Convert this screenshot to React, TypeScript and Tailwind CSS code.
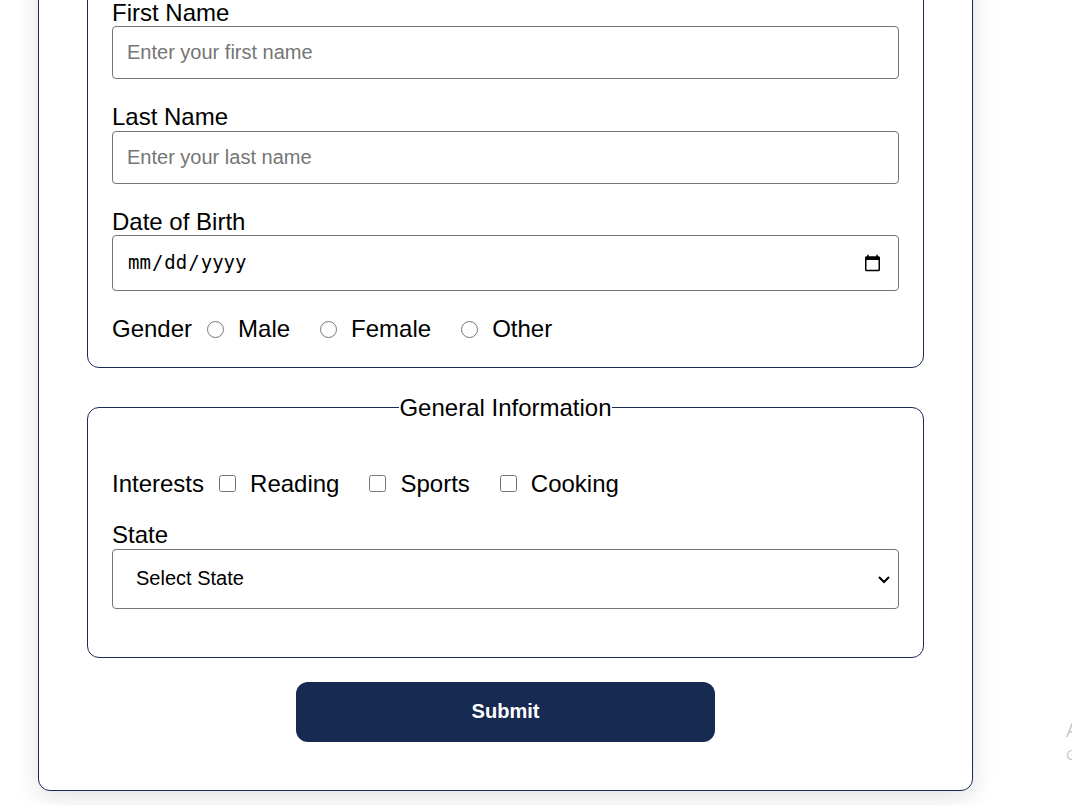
import React, { useState } from 'react';

const font = "font-['Liberation_Sans',Arial,sans-serif]";

const inputCls =
  'block w-full rounded border border-[#767676] bg-white px-[14px] py-[14px] text-[20px] leading-[23px] text-black placeholder:text-[#757575] outline-none';

const labelCls = 'block text-[24px] leading-[27.6px]';

const App: React.FC = () => {
  const [gender, setGender] = useState('');
  const [interests, setInterests] = useState<string[]>([]);

  const toggleInterest = (name: string) => {
    setInterests(prev => (prev.includes(name) ? prev.filter(i => i !== name) : [...prev, name]));
  };

  return (
    <div className={`relative h-[805px] w-full overflow-hidden bg-white leading-[1.15] text-black ${font}`}>
      {/* Form card - page is scrolled down, its top sits above the viewport */}
      <form
        onSubmit={e => e.preventDefault()}
        className="ml-[38px] -mt-[102px] w-[935px] rounded-xl border border-[#172a54] bg-white p-12 shadow-[0_6px_24px_rgba(0,0,0,0.12)]"
      >
        {/* Personal information */}
        <fieldset className="rounded-xl border border-[#1c2a55] px-6 pt-[50.6px] pb-6">
          <label className={labelCls}>First Name</label>
          <input type="text" placeholder="Enter your first name" className={inputCls} />

          <label className={`mt-6 ${labelCls}`}>Last Name</label>
          <input type="text" placeholder="Enter your last name" className={inputCls} />

          <label className={`mt-6 ${labelCls}`}>Date of Birth</label>
          <input
            type="date"
            className="block h-[56px] w-full rounded border border-[#767676] bg-white px-[14px] font-['DejaVu_Sans_Mono',monospace] text-[19px] text-black outline-none"
          />

          <div className="mt-6 flex items-center text-[24px] leading-[27.6px]">
            <span>Gender</span>
            {['Male', 'Female', 'Other'].map((g, i) => (
              <label key={g} className={`flex items-center ${i === 0 ? 'ml-[15px]' : 'ml-[30px]'}`}>
                <input
                  type="radio"
                  name="gender"
                  checked={gender === g}
                  onChange={() => setGender(g)}
                  className="m-0 mr-[14px] h-[17px] w-[17px]"
                />
                {g}
              </label>
            ))}
          </div>
        </fieldset>

        {/* General information */}
        <fieldset className="mt-[26px] rounded-xl border border-[#1c2a55] px-6 pt-12 pb-12">
          <legend className="mx-auto text-[24px] leading-[27.6px]">General Information</legend>

          <div className="flex items-center text-[24px] leading-[27.6px]">
            <span>Interests</span>
            {['Reading', 'Sports', 'Cooking'].map((item, i) => (
              <label key={item} className={`flex items-center ${i === 0 ? 'ml-[15px]' : 'ml-[30px]'}`}>
                <input
                  type="checkbox"
                  checked={interests.includes(item)}
                  onChange={() => toggleInterest(item)}
                  className="m-0 mr-[14px] h-[17px] w-[17px]"
                />
                {item}
              </label>
            ))}
          </div>

          <label className={`mt-6 ${labelCls}`}>State</label>
          <div className="relative">
            <select className="block h-[60px] w-full appearance-none rounded border border-[#767676] bg-white pl-[23px] text-[20px] text-black outline-none">
              <option>Select State</option>
              <option>California</option>
              <option>New York</option>
              <option>Texas</option>
            </select>
            <svg
              className="pointer-events-none absolute right-[7px] top-1/2 h-4 w-4 -translate-y-1/2"
              viewBox="0 0 16 16"
              fill="none"
              stroke="black"
              strokeWidth="2"
            >
              <path d="M3 6l5 5 5-5" />
            </svg>
          </div>
        </fieldset>

        <div className="mt-6 flex justify-center">
          <button
            type="submit"
            className="h-[60px] w-1/2 rounded-xl bg-[#172a51] text-[20px] font-bold text-white"
          >
            Submit
          </button>
        </div>
      </form>

      {/* Windows activation watermark, cut off at the right edge */}
      <div className="pointer-events-none absolute left-[1066px] top-[716px] whitespace-nowrap font-['Open_Sans',sans-serif] text-[#c8c8c8]">
        <div className="text-[20px] leading-[28px]">Activate Windows</div>
        <div className="text-[14px] leading-[22px]">Go to Settings to activate Windows.</div>
      </div>
    </div>
  );
};

export default App;
